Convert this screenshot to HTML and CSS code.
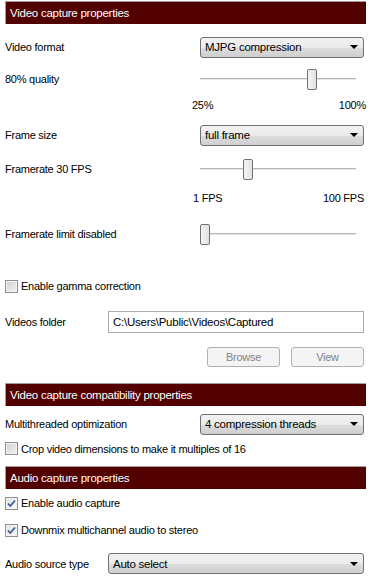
FILE: index.html
```html
<!DOCTYPE html>
<html lang="en">
<head>
    <meta charset="UTF-8">
    <title>Capture properties</title>
    <link rel="stylesheet" href="styles.css">
</head>
<body>
    <div class="panel">
        <!-- Video capture -->
        <div class="section-head">Video capture properties</div>

        <div class="row row-format">
            <span class="label">Video format</span>
            <div class="select"><span>MJPG compression</span><i class="arrow"></i></div>
        </div>

        <div class="row row-quality">
            <span class="label">80% quality</span>
            <div class="slider"><div class="track"></div><div class="thumb" style="left: 107px"></div></div>
        </div>
        <div class="scale scale-quality"><span>25%</span><span>100%</span></div>

        <div class="row row-frame">
            <span class="label">Frame size</span>
            <div class="select"><span>full frame</span><i class="arrow"></i></div>
        </div>

        <div class="row row-rate">
            <span class="label">Framerate 30 FPS</span>
            <div class="slider"><div class="track"></div><div class="thumb" style="left: 43px"></div></div>
        </div>
        <div class="scale scale-rate"><span>1 FPS</span><span>100 FPS</span></div>

        <div class="row row-limit">
            <span class="label">Framerate limit disabled</span>
            <div class="slider"><div class="track"></div><div class="thumb" style="left: 0px"></div></div>
        </div>

        <label class="check check-gamma"><span class="box"></span>Enable gamma correction</label>

        <div class="row row-folder">
            <span class="label label-short">Videos folder</span>
            <div class="textbox">C:\Users\Public\Videos\Captured</div>
        </div>

        <div class="buttons">
            <button class="btn" disabled>Browse</button>
            <button class="btn" disabled>View</button>
        </div>

        <!-- Compatibility -->
        <div class="section-head head-compat">Video capture compatibility properties</div>

        <div class="row row-threads">
            <span class="label">Multithreaded optimization</span>
            <div class="select"><span>4 compression threads</span><i class="arrow"></i></div>
        </div>

        <label class="check check-crop"><span class="box"></span>Crop video dimensions to make it multiples of 16</label>

        <!-- Audio -->
        <div class="section-head head-audio">Audio capture properties</div>

        <label class="check check-audio"><span class="box checked"><svg viewBox="0 0 13 13" width="13" height="13"><path d="M3 6.5 L5.3 9 L10 3.5" fill="none" stroke="#3d5a9c" stroke-width="1.8"/></svg></span>Enable audio capture</label>
        <label class="check check-downmix"><span class="box checked"><svg viewBox="0 0 13 13" width="13" height="13"><path d="M3 6.5 L5.3 9 L10 3.5" fill="none" stroke="#3d5a9c" stroke-width="1.8"/></svg></span>Downmix multichannel audio to stereo</label>

        <div class="row row-source">
            <span class="label label-short">Audio source type</span>
            <div class="select"><span>Auto select</span><i class="arrow"></i></div>
        </div>
    </div>
</body>
</html>
```

FILE: styles.css
```css
body {
    margin: 0;
    background: #fff;
    color: #000;
    font-family: 'Liberation Sans', Arial, sans-serif;
    font-size: 11px;
    letter-spacing: -0.25px;
}

.panel {
    width: 359px;
    padding: 1px 0 0 5px;
}

/* Section headers */
.section-head {
    height: 22px;
    line-height: 23px;
    background: #520000;
    color: #fff;
    padding-left: 4px;
    margin-right: -2px;
    border-top: 1px solid #a0a0a0;
    border-left: 1px solid #a0a0a0;
    font-size: 11.5px;
}

.head-compat {
    margin-top: 16px;
}

.head-audio {
    margin-top: 9px;
}

/* Rows */
.row {
    display: flex;
    align-items: center;
    height: 22px;
}

.label {
    width: 195px;
    flex: none;
}

.label-short {
    width: 103px;
}

.row-format { margin-top: 12px; }
.row-quality { margin-top: 10px; }
.row-frame { margin-top: 10px; }
.row-rate { margin-top: 12px; }
.row-limit { margin-top: 16px; }
.row-folder { margin-top: 16px; }
.row-threads { margin-top: 7px; }
.row-source { margin-top: 14px; height: 21px; }

/* Dropdown */
.select {
    flex: 1;
    height: 19px;
    border: 1px solid #707070;
    border-radius: 3px;
    background: linear-gradient(#f2f2f2, #ebebeb 50%, #dddddd 51%, #cfcfcf);
    display: flex;
    align-items: center;
    padding-left: 4px;
    font-size: 11.5px;
}

.select span {
    flex: 1;
}

.arrow {
    width: 0;
    height: 0;
    border-left: 4px solid transparent;
    border-right: 4px solid transparent;
    border-top: 4px solid #000;
    margin-right: 5px;
}

/* Trackbar */
.slider {
    position: relative;
    width: 156px;
    height: 22px;
}

.track {
    position: absolute;
    left: 0;
    right: 0;
    top: 10px;
    height: 1px;
    background: #b5b5b5;
    border-bottom: 1px solid #e7e7e7;
}

.thumb {
    position: absolute;
    top: 1px;
    width: 8px;
    height: 19px;
    border: 1px solid #707070;
    border-radius: 2px;
    background: linear-gradient(90deg, #f4f4f4, #e2e2e2);
}

.scale {
    display: flex;
    justify-content: space-between;
    height: 18px;
    align-items: center;
    width: 174px;
    margin-left: 187px;
}

.scale-quality { margin-top: 6px; }
.scale-rate { margin-top: 9px; width: 171px; margin-left: 188px; }

/* Checkboxes */
.check {
    display: flex;
    align-items: center;
    height: 18px;
    gap: 3px;
}

.box {
    width: 11px;
    height: 11px;
    border: 1px solid #8e8f8f;
    background: linear-gradient(135deg, #cfcfcf, #f3f3f3);
    box-shadow: inset 0 0 0 1px #f4f4f4;
    position: relative;
}

.box.checked {
    background: linear-gradient(135deg, #e0e0e0, #fbfbfb);
}

.box svg {
    position: absolute;
    left: -1px;
    top: -1px;
}

.check-gamma { margin-top: 32px; }
.check-crop { margin-top: 5px; height: 17px; }
.check-audio { margin-top: 5px; }
.check-downmix { margin-top: 9px; }

/* Text field */
.textbox {
    flex: 1;
    height: 20px;
    line-height: 20px;
    border: 1px solid #abadb3;
    padding-left: 4px;
    font-size: 11.5px;
}

/* Buttons */
.buttons {
    display: flex;
    justify-content: flex-end;
    gap: 11px;
    margin-top: 14px;
    height: 20px;
}

.btn {
    width: 73px;
    height: 20px;
    font-family: inherit;
    font-size: 11px;
    letter-spacing: inherit;
    color: #838383;
    background: #f4f4f4;
    border: 1px solid #adb2b5;
    border-radius: 3px;
    padding: 0;
}
```
